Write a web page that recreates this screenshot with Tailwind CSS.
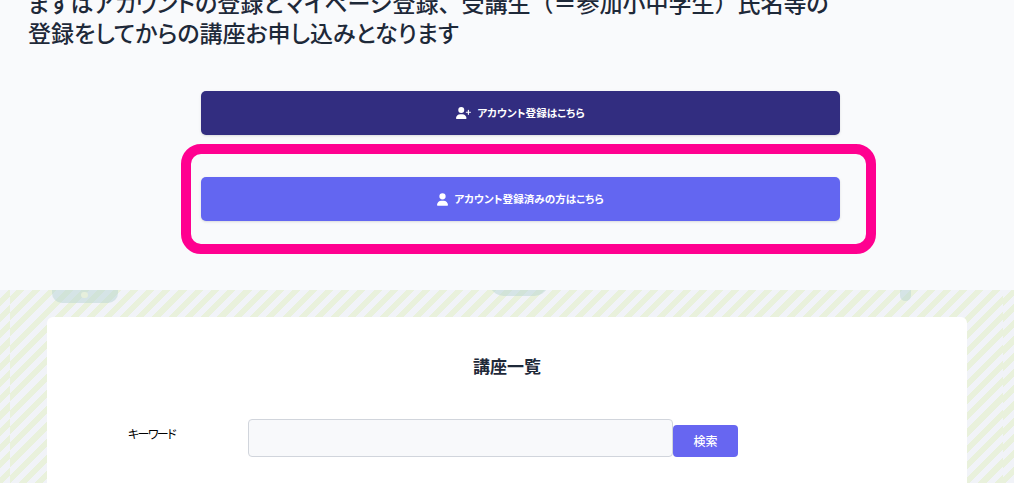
<!DOCTYPE html>
<html lang="ja">
<head>
  <meta charset="UTF-8" />
  <meta name="viewport" content="width=device-width, initial-scale=1.0" />
  <title>講座一覧</title>
  <script src="https://cdn.jsdelivr.net/npm/@tailwindcss/browser@4"></script>
</head>
<body class="h-[483px] overflow-hidden bg-[#f9fafc] font-['Noto_Sans_CJK_JP',sans-serif] text-gray-800 [font-feature-settings:'palt']">

  <!-- Intro + account buttons -->
  <section class="relative h-[290px] overflow-hidden">
    <h1 class="-mt-[13px] ml-[28px] w-[830px] text-[23px] leading-[30px] font-medium">
      まずはアカウントの登録とマイページ登録<span class="[font-feature-settings:normal] [text-spacing-trim:space-all]">、</span>受講生<span class="[font-feature-settings:normal] [text-spacing-trim:space-all]">（＝</span>参加小中学生<span class="[font-feature-settings:normal] [text-spacing-trim:space-all]">）</span>氏名等の<br>登録をしてからの講座お申し込みとなります
    </h1>

    <div class="mt-[44px] ml-[201px] flex w-[639px] flex-col gap-[42px]">
      <a href="#" class="flex h-[44px] items-center justify-center gap-[6px] rounded-[5px] bg-[#322d80] text-[10.6px] font-bold text-white shadow-sm">
        <svg class="h-[12px] w-[15px] fill-white" viewBox="0 0 640 512"><path d="M96 128a128 128 0 1 1 256 0A128 128 0 1 1 96 128zM0 482.3C0 383.8 79.8 304 178.3 304h91.4C368.2 304 448 383.8 448 482.3c0 16.4-13.3 29.7-29.7 29.7H29.7C13.3 512 0 498.7 0 482.3zM504 312V248H440c-13.3 0-24-10.7-24-24s10.7-24 24-24h64V136c0-13.3 10.7-24 24-24s24 10.7 24 24v64h64c13.3 0 24 10.7 24 24s-10.7 24-24 24H552v64c0 13.3-10.7 24-24 24s-24-10.7-24-24z"/></svg>
        アカウント登録はこちら
      </a>
      <a href="#" class="flex h-[44px] items-center justify-center gap-[6px] rounded-[5px] bg-[#6366f1] text-[10.6px] font-bold text-white shadow-sm">
        <svg class="h-[13px] w-[11px] fill-white" viewBox="0 0 448 512"><path d="M224 256A128 128 0 1 0 224 0a128 128 0 1 0 0 256zm-45.7 48C79.8 304 0 383.8 0 482.3C0 498.7 13.3 512 29.7 512H418.3c16.4 0 29.7-13.3 29.7-29.7C448 383.8 368.2 304 269.7 304H178.3z"/></svg>
        アカウント登録済みの方はこちら
      </a>
    </div>

    <!-- highlight frame over the second button -->
    <div class="absolute top-[144px] left-[181px] h-[110px] w-[695px] rounded-[20px] border-[10px] border-[#ff0090]"></div>
  </section>

  <!-- Striped background area -->
  <section class="relative h-[193px] overflow-hidden bg-[repeating-linear-gradient(135deg,#e9f1dc_0px,#e9f1dc_5.75px,#f1f3f8_5.75px,#f1f3f8_11.5px)] px-[47px] pt-[27px]">
    <div class="absolute top-0 bottom-0 left-0 w-[10px] bg-[repeating-linear-gradient(135deg,#f1f3f8_0px,#f1f3f8_5.75px,#e9f1dc_5.75px,#e9f1dc_11.5px)]"></div>
    <div class="absolute top-0 right-0 bottom-0 w-[11px] bg-[repeating-linear-gradient(135deg,#f1f3f8_0px,#f1f3f8_5.75px,#e9f1dc_5.75px,#e9f1dc_11.5px)]"></div>

    <div class="absolute top-0 left-[52px] h-[13px] w-[66px] rounded-b-[10px] bg-[#b9d6d4]/50"></div>
    <div class="absolute top-[2px] left-[81px] h-[6px] w-[7px] rounded-full bg-[#e6efdc]"></div>
    <div class="absolute -top-[24px] left-[489px] h-[30px] w-[60px] rounded-full bg-[#b9d6d4]/50"></div>
    <div class="absolute top-0 left-[900px] h-[11px] w-[11px] rounded-b-full bg-[#b9d6d4]/50"></div>

    <div class="relative h-[300px] rounded-t-[6px] bg-white">
      <h2 class="pt-[37px] text-center text-[17px] leading-[24px] font-semibold">講座一覧</h2>
      <form class="mt-[41px] flex items-end pl-[81px]">
        <label class="mb-[14px] w-[120px] text-[12px] leading-[18px] tracking-[-1.6px] text-black">キーワード</label>
        <input type="text" class="h-[38px] w-[425px] rounded-[4px] border border-gray-300 bg-[#f8f9fb]" />
        <button type="button" class="h-[32px] w-[65px] rounded-[4px] bg-[#6766f1] text-[12px] font-medium text-white">検索</button>
      </form>
    </div>
  </section>

</body>
</html>
